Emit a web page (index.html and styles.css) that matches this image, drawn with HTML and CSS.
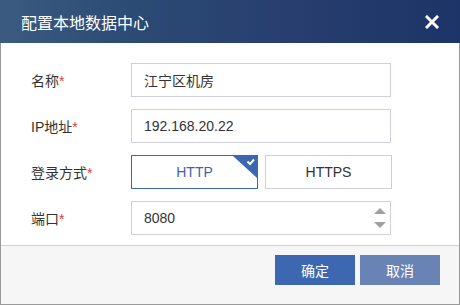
FILE: index.html
```html
<!DOCTYPE html>
<html lang="zh-CN">
<head>
  <meta charset="UTF-8">
  <title>配置本地数据中心</title>
  <link rel="stylesheet" href="styles.css">
</head>
<body>
  <div class="dialog">
    <!-- Header -->
    <div class="dialog-header">
      <span class="dialog-title">配置本地数据中心</span>
      <svg class="close" width="14" height="14" viewBox="0 0 14 14">
        <path d="M2 2 L12 12 M12 2 L2 12" stroke="#fff" stroke-width="3" stroke-linecap="square"/>
      </svg>
    </div>

    <!-- Form -->
    <div class="dialog-body">
      <div class="form-row">
        <label class="form-label">名称<span class="req">*</span></label>
        <div class="field">江宁区机房</div>
      </div>
      <div class="form-row">
        <label class="form-label">IP地址<span class="req">*</span></label>
        <div class="field">192.168.20.22</div>
      </div>
      <div class="form-row">
        <label class="form-label">登录方式<span class="req">*</span></label>
        <div class="choices">
          <div class="choice selected">
            HTTP
            <svg class="check" width="24" height="22" viewBox="0 0 24 22">
              <polygon points="0,0 24,0 24,22" fill="#3e67b1"/>
              <path d="M14.5 5.5 L17 8 L21 3.5" stroke="#fff" stroke-width="2" fill="none"/>
            </svg>
          </div>
          <div class="choice">HTTPS</div>
        </div>
      </div>
      <div class="form-row">
        <label class="form-label">端口<span class="req">*</span></label>
        <div class="field number">
          <span>8080</span>
          <span class="spin">
            <svg width="12" height="6" viewBox="0 0 12 6"><polygon points="6,0 12,6 0,6" fill="#a0a0a0"/></svg>
            <svg width="12" height="6" viewBox="0 0 12 6"><polygon points="0,0 12,0 6,6" fill="#a0a0a0"/></svg>
          </span>
        </div>
      </div>
    </div>

    <!-- Footer -->
    <div class="dialog-footer">
      <button class="btn primary">确定</button>
      <button class="btn secondary">取消</button>
    </div>
  </div>
</body>
</html>
```

FILE: styles.css
```css
body { margin: 0; font-family: "Liberation Sans", "Noto Sans CJK SC", sans-serif; color: #333; }
.dialog { width: 460px; height: 305px; box-sizing: border-box; border: 1px solid #9a9a9a; border-top: none; display: flex; flex-direction: column; background: #fff; }
.dialog-header { height: 43px; margin: 0 -1px; display: flex; align-items: center; justify-content: space-between; padding: 0 21px; background: linear-gradient(to right, #3c5b80 0%, #2b4a74 30%, #283f6f 60%, #1c3467 100%); color: #fff; }
.dialog-title { font-size: 16px; }
.dialog-body { flex: 1; padding-top: 20px; display: flex; flex-direction: column; gap: 12px; }
.form-row { display: flex; align-items: center; height: 34px; }
.form-label { width: 130px; padding-left: 30px; box-sizing: border-box; font-size: 14px; }
.req { color: #e4393c; }
.field { width: 260px; height: 34px; box-sizing: border-box; border: 1px solid #cfcde0; padding: 0 12px; display: flex; align-items: center; font-size: 14px; }
.field.number { justify-content: space-between; padding-right: 4px; }
.spin { display: flex; flex-direction: column; gap: 8px; }
.spin svg { display: block; }
.choices { display: flex; gap: 7px; }
.choice { width: 127px; height: 34px; box-sizing: border-box; border: 1px solid #cfcde0; display: flex; align-items: center; justify-content: center; font-size: 14px; position: relative; }
.choice.selected { border-color: #3e67b1; color: #4563a8; }
.check { position: absolute; top: 0; right: 0; }
.dialog-footer { height: 49px; border-top: 1px solid #cfcde0; background: #f6f6f6; display: flex; justify-content: flex-end; align-items: flex-start; padding: 9px 19px 0 0; gap: 5px; }
.btn { width: 80px; height: 30px; border: none; color: #fff; font-size: 14px; font-family: "Liberation Sans", "Noto Sans CJK SC", sans-serif; padding: 0; }
.primary { background: #3e67b1; }
.secondary { background: #6a83b5; }
```
